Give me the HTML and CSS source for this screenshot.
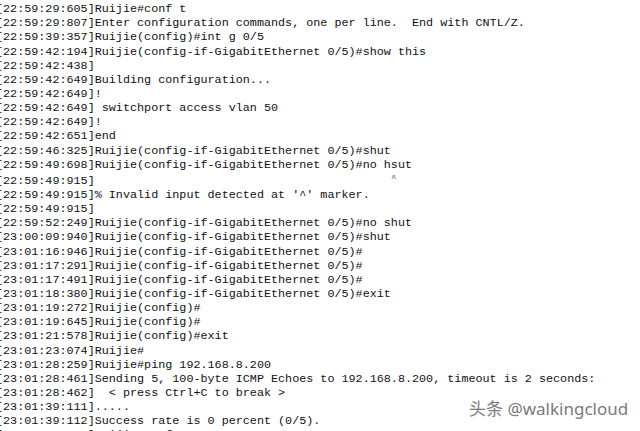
FILE: index.html
```html
<!DOCTYPE html>
<html>
<head>
<meta charset="utf-8">
<link rel="stylesheet" href="styles.css">
</head>
<body>
<div class="screen">
<pre class="term">[22:59:27:398]Ruijie#
[22:59:29:605]Ruijie#conf t
[22:59:29:807]Enter configuration commands, one per line.  End with CNTL/Z.
[22:59:39:357]Ruijie(config)#int g 0/5
[22:59:42:194]Ruijie(config-if-GigabitEthernet 0/5)#show this
[22:59:42:438]
[22:59:42:649]Building configuration...
[22:59:42:649]!
[22:59:42:649] switchport access vlan 50
[22:59:42:649]!
[22:59:42:651]end
[22:59:46:325]Ruijie(config-if-GigabitEthernet 0/5)#shut
[22:59:49:698]Ruijie(config-if-GigabitEthernet 0/5)#no hsut
[22:59:49:915]                                          <span class="caret">^</span>
[22:59:49:915]% Invalid input detected at '^' marker.
[22:59:49:915]
[22:59:52:249]Ruijie(config-if-GigabitEthernet 0/5)#no shut
[23:00:09:940]Ruijie(config-if-GigabitEthernet 0/5)#shut
[23:01:16:946]Ruijie(config-if-GigabitEthernet 0/5)#
[23:01:17:291]Ruijie(config-if-GigabitEthernet 0/5)#
[23:01:17:491]Ruijie(config-if-GigabitEthernet 0/5)#
[23:01:18:380]Ruijie(config-if-GigabitEthernet 0/5)#exit
[23:01:19:272]Ruijie(config)#
[23:01:19:645]Ruijie(config)#
[23:01:21:578]Ruijie(config)#exit
[23:01:23:074]Ruijie#
[23:01:28:259]Ruijie#ping 192.168.8.200
[23:01:28:461]Sending 5, 100-byte ICMP Echoes to 192.168.8.200, timeout is 2 seconds:
[23:01:28:462]  &lt; press Ctrl+C to break &gt;
[23:01:39:111].....
[23:01:39:112]Success rate is 0 percent (0/5).
[23:01:56:909]Ruijie#conf t</pre>
<div class="mark">头条 @walkingcloud</div>
</div>
</body>
</html>
```

FILE: styles.css
```css
html, body {
  margin: 0;
  padding: 0;
  background: #ffffff;
}
.screen {
  position: relative;
  width: 640px;
  height: 431px;
  overflow: hidden;
  background: #ffffff;
}
.term {
  margin: -12px 0 0 -4px;
  padding: 0;
  font-family: "Liberation Mono", "DejaVu Sans Mono", monospace;
  font-size: 11.76px;
  line-height: 14.14px;
  color: #111111;
  white-space: pre;
}
.caret {
  font-size: 9px;
  vertical-align: 3px;
  color: #555555;
}
.mark {
  position: absolute;
  left: 469px;
  top: 398px;
  font-family: "Noto Sans", "Noto Sans CJK SC", sans-serif;
  font-size: 17px;
  line-height: 22px;
  color: #7a7a7a;
  white-space: nowrap;
  text-shadow: 0 0 1px rgba(255,255,255,0.9);
}
```
